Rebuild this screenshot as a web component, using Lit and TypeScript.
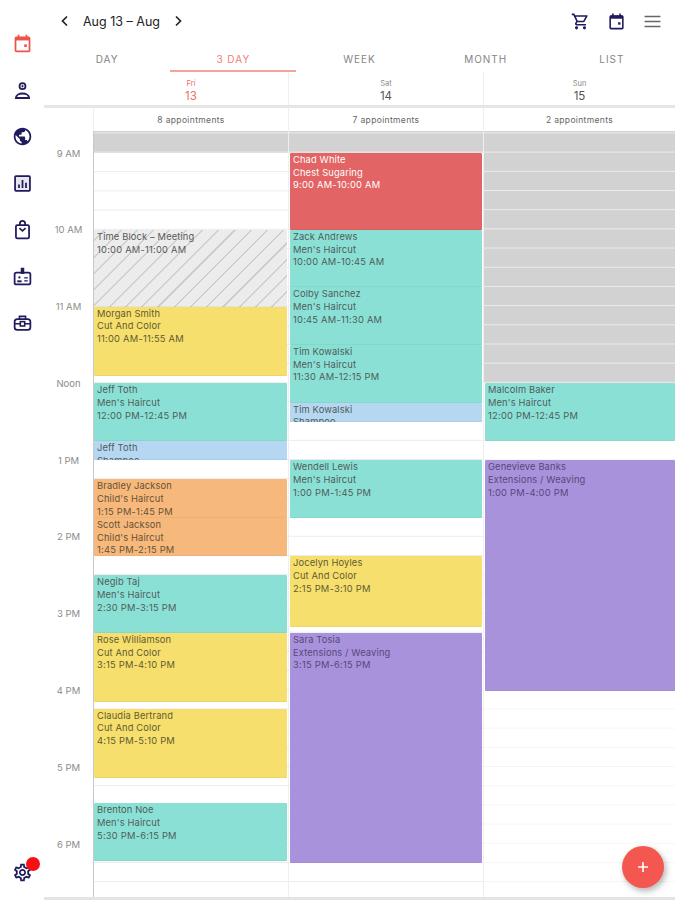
import { LitElement, css, html, svg } from "lit";
import { customElement } from "lit/decorators.js";

const HOUR = 76.8;
const NINE_AM_Y = 22; // the 9 AM line sits 22px below the grid's top edge

type Kind = "teal" | "yellow" | "orange" | "blue" | "purple" | "red" | "block" | "closed";

interface Appt {
  kind: Kind;
  from: number;
  to: number;
  lines?: string[];
}

const t = (h: number, m = 0) => h * 60 + m;
const yOf = (min: number) => NINE_AM_Y + ((min - t(9)) * HOUR) / 60;

const haircut = (name: string, time: string) => [name, "Men's Haircut", time];
const color = (name: string, time: string) => [name, "Cut And Color", time];

const DAYS: { dow: string; num: string; count: string; today?: boolean; appts: Appt[] }[] = [
  {
    dow: "Fri",
    num: "13",
    count: "8 appointments",
    today: true,
    appts: [
      { kind: "closed", from: t(8, 40), to: t(9) },
      { kind: "block", from: t(10), to: t(11), lines: ["Time Block – Meeting", "10:00 AM-11:00 AM"] },
      { kind: "yellow", from: t(11), to: t(11, 54), lines: color("Morgan Smith", "11:00 AM-11:55 AM") },
      { kind: "teal", from: t(12), to: t(12, 45), lines: haircut("Jeff Toth", "12:00 PM-12:45 PM") },
      { kind: "blue", from: t(12, 45), to: t(13), lines: ["Jeff Toth", "Shampoo"] },
      { kind: "orange", from: t(13, 15), to: t(13, 45), lines: ["Bradley Jackson", "Child's Haircut", "1:15 PM-1:45 PM"] },
      { kind: "orange", from: t(13, 45), to: t(14, 15), lines: ["Scott Jackson", "Child's Haircut", "1:45 PM-2:15 PM"] },
      { kind: "teal", from: t(14, 30), to: t(15, 15), lines: haircut("Negib Taj", "2:30 PM-3:15 PM") },
      { kind: "yellow", from: t(15, 15), to: t(16, 9), lines: color("Rose Williamson", "3:15 PM-4:10 PM") },
      { kind: "yellow", from: t(16, 14), to: t(17, 8), lines: color("Claudia Bertrand", "4:15 PM-5:10 PM") },
      { kind: "teal", from: t(17, 28), to: t(18, 13), lines: haircut("Brenton Noe", "5:30 PM-6:15 PM") },
    ],
  },
  {
    dow: "Sat",
    num: "14",
    count: "7 appointments",
    appts: [
      { kind: "closed", from: t(8, 40), to: t(9) },
      { kind: "red", from: t(9), to: t(10), lines: ["Chad White", "Chest Sugaring", "9:00 AM-10:00 AM"] },
      { kind: "teal", from: t(10), to: t(10, 45), lines: haircut("Zack Andrews", "10:00 AM-10:45 AM") },
      { kind: "teal", from: t(10, 45), to: t(11, 30), lines: haircut("Colby Sanchez", "10:45 AM-11:30 AM") },
      { kind: "teal", from: t(11, 30), to: t(12, 15), lines: haircut("Tim Kowalski", "11:30 AM-12:15 PM") },
      { kind: "blue", from: t(12, 15), to: t(12, 30), lines: ["Tim Kowalski", "Shampoo"] },
      { kind: "teal", from: t(13), to: t(13, 45), lines: haircut("Wendell Lewis", "1:00 PM-1:45 PM") },
      { kind: "yellow", from: t(14, 15), to: t(15, 10), lines: color("Jocelyn Hoyles", "2:15 PM-3:10 PM") },
      { kind: "purple", from: t(15, 15), to: t(18, 15), lines: ["Sara Tosia", "Extensions / Weaving", "3:15 PM-6:15 PM"] },
    ],
  },
  {
    dow: "Sun",
    num: "15",
    count: "2 appointments",
    appts: [
      { kind: "closed", from: t(8, 40), to: t(12) },
      { kind: "teal", from: t(12), to: t(12, 45), lines: haircut("Malcolm Baker", "12:00 PM-12:45 PM") },
      { kind: "purple", from: t(13), to: t(16), lines: ["Genevieve Banks", "Extensions / Weaving", "1:00 PM-4:00 PM"] },
    ],
  },
];

const HOURS = ["9 AM", "10 AM", "11 AM", "Noon", "1 PM", "2 PM", "3 PM", "4 PM", "5 PM", "6 PM"];
const TABS = ["DAY", "3 DAY", "WEEK", "MONTH", "LIST"];

const icon = (body: unknown, cls = "") =>
  html`<svg class="icon ${cls}" viewBox="0 0 24 24" fill="none" stroke="currentColor" stroke-width="2">${body}</svg>`;

const ICONS = {
  event: svg`<rect x="4" y="5" width="16" height="16" rx="1"/><path d="M4 6.5h16" stroke-width="4"/><path d="M7.5 2v4M16.5 2v4"/><rect x="14" y="13" width="3" height="3" fill="currentColor" stroke="none"/>`,
  person: svg`<circle cx="12" cy="7" r="3.4"/><path d="M12 5.5v3M10.5 7h3" stroke-width="1"/><path d="M4.5 20.5c0-3 3.5-5 7.5-5s7.5 2 7.5 5z" stroke-width="2.2"/>`,
  globe: svg`<path stroke="none" fill="currentColor" d="M12 2C6.48 2 2 6.48 2 12s4.48 10 10 10 10-4.48 10-10S17.52 2 12 2zm-1 17.93c-3.95-.49-7-3.85-7-7.93 0-.62.08-1.21.21-1.79L9 15v1c0 1.1.9 2 2 2v1.93zm6.9-2.54c-.26-.81-1-1.39-1.9-1.39h-1v-3c0-.55-.45-1-1-1H8v-2h2c.55 0 1-.45 1-1V7h2c1.1 0 2-.9 2-2v-.41c2.93 1.19 5 4.06 5 7.41 0 2.08-.8 3.97-2.1 5.39z"/>`,
  chart: svg`<rect x="3.5" y="3.5" width="17" height="17" rx="1" fill="#e6e6ee"/><path d="M8 17v-4M12 17V8M16 17v-6"/>`,
  bag: svg`<rect x="4.5" y="7" width="15" height="15" rx="1.5"/><path d="M9 7V5a3 3 0 0 1 6 0v2M8.5 10.5l3.5 3 3.5-3"/>`,
  badge: svg`<rect x="3" y="7.5" width="18" height="13.5" rx="2"/><path d="M12 2v7" stroke-width="4"/><circle cx="8.5" cy="13" r="1.3" fill="currentColor" stroke="none"/><path d="M6 17.5h5" stroke-width="2.2"/><path d="M14 13.5h4M14 17h4" stroke-width="1.5"/>`,
  briefcase: svg`<rect x="3" y="8" width="18" height="12.5" rx="3"/><path d="M8.5 8V5h7v3M3 13.5h18" stroke-width="1.8"/><rect x="9.5" y="11" width="5" height="5" fill="#fff" stroke-width="1.8"/>`,
  cart: svg`<path stroke="none" fill="currentColor" d="M15.55 13c.75 0 1.41-.41 1.75-1.03l3.58-6.49A.996.996 0 0 0 20.01 4H5.21l-.94-2H1v2h2l3.6 7.59-1.35 2.44C4.52 15.37 5.48 17 7 17h12v-2H7l1.1-2h7.45zM6.16 6h12.15l-2.76 5H8.53L6.16 6zM7 18c-1.1 0-1.99.9-1.99 2S5.9 22 7 22s2-.9 2-2-.9-2-2-2zm10 0c-1.1 0-1.99.9-1.99 2s.89 2 1.99 2 2-.9 2-2-.9-2-2-2z"/>`,
  menu: svg`<path d="M2 5.7h20M2 12h20M2 18.3h20" stroke-width="1.7"/>`,
  gear: svg`<path stroke="none" fill="currentColor" d="M19.43 12.98c.04-.32.07-.64.07-.98 0-.34-.03-.66-.07-.98l2.11-1.65c.19-.15.24-.42.12-.64l-2-3.46c-.09-.16-.26-.25-.44-.25-.06 0-.12.01-.17.03l-2.49 1c-.52-.4-1.08-.73-1.69-.98l-.38-2.65C14.46 2.18 14.25 2 14 2h-4c-.25 0-.46.18-.49.42l-.38 2.65c-.61.25-1.17.59-1.69.98l-2.49-1c-.06-.02-.12-.03-.18-.03-.17 0-.34.09-.43.25l-2 3.46c-.13.22-.07.49.12.64l2.11 1.65c-.04.32-.07.65-.07.98 0 .33.03.66.07.98l-2.11 1.65c-.19.15-.24.42-.12.64l2 3.46c.09.16.26.25.44.25.06 0 .12-.01.17-.03l2.49-1c.52.4 1.08.73 1.69.98l.38 2.65c.03.24.24.42.49.42h4c.25 0 .46-.18.49-.42l.38-2.65c.61-.25 1.17-.59 1.69-.98l2.49 1c.06.02.12.03.18.03.17 0 .34-.09.43-.25l2-3.46c.12-.22.07-.49-.12-.64l-2.11-1.65zm-1.98-1.71c.04.31.05.52.05.73 0 .21-.02.43-.05.73l-.14 1.13.89.7 1.08.84-.7 1.21-1.27-.51-1.04-.42-.9.68c-.43.32-.84.56-1.25.73l-1.06.43-.16 1.13-.2 1.35h-1.4l-.19-1.35-.16-1.13-1.06-.43c-.43-.18-.83-.41-1.23-.71l-.91-.7-1.06.43-1.27.51-.7-1.21 1.08-.84.89-.7-.14-1.13c-.03-.31-.05-.54-.05-.74s.02-.43.05-.73l.14-1.13-.89-.7-1.08-.84.7-1.21 1.27.51 1.04.42.9-.68c.43-.32.84-.56 1.25-.73l1.06-.43.16-1.13.2-1.35h1.39l.19 1.35.16 1.13 1.06.43c.43.18.83.41 1.23.71l.91.7 1.06-.43 1.27-.51.7 1.21-1.07.85-.89.7.14 1.13zM12 8c-2.21 0-4 1.79-4 4s1.79 4 4 4 4-1.79 4-4-1.79-4-4-4zm0 6c-1.1 0-2-.9-2-2s.9-2 2-2 2 .9 2 2-.9 2-2 2z"/>`,
};

const chevron = (d: string) =>
  html`<svg class="chev" viewBox="0 0 10 12" fill="none" stroke="currentColor" stroke-width="1.7"><path d=${d} /></svg>`;

@customElement("app-root")
export class AppRoot extends LitElement {
  static styles = css`
    :host {
      display: flex;
      position: relative;
      width: 675px;
      height: 900px;
      overflow: hidden;
      background: #fff;
      color: #1f1b5c;
      font-family: Inter, "Open Sans", sans-serif;
    }
    .icon {
      display: block;
      width: 21px;
      height: 21px;
    }
    .side {
      width: 44px;
      flex: none;
      display: flex;
      flex-direction: column;
      align-items: center;
      gap: 25.5px;
      padding: 33px 0 17px;
      box-sizing: border-box;
    }
    .side .active {
      color: #f0524c;
    }
    .gear {
      margin-top: auto;
      position: relative;
    }
    .dot {
      position: absolute;
      top: -5px;
      left: 14.5px;
      width: 14px;
      height: 14px;
      border-radius: 50%;
      background: #f80f14;
    }
    .main {
      flex: 1;
      min-width: 0;
      display: flex;
      flex-direction: column;
    }
    .top {
      height: 42px;
      flex: none;
      display: flex;
      align-items: center;
      box-sizing: border-box;
      padding: 0 13px 0 16px;
      color: #222;
      font-size: 12.5px;
    }
    .chev {
      width: 10px;
      height: 12px;
      flex: none;
    }
    .range {
      width: 78px;
      margin: 0 12px 0 13px;
      white-space: nowrap;
    }
    .actions {
      margin-left: auto;
      display: flex;
      gap: 17px;
      color: #1f1b5c;
    }
    .actions .icon {
      width: 19px;
      height: 19px;
    }
    .actions .menu {
      color: #666;
    }
    .tabs {
      height: 30px;
      flex: none;
      display: grid;
      grid-template-columns: repeat(5, 1fr);
    }
    .tab {
      display: flex;
      align-items: center;
      justify-content: center;
      padding-top: 4px;
      box-sizing: border-box;
      font-size: 10px;
      letter-spacing: 1px;
      color: #858585;
    }
    .tab.on {
      color: #f08078;
      border-bottom: 2.5px solid #f6a3a0;
      padding-top: 6px;
    }
    .cols {
      display: grid;
      grid-template-columns: 49px 195px 195px 1fr;
      flex: none;
    }
    .cell {
      border-left: 1px solid #efefef;
      text-align: center;
    }
    .head {
      height: 33px;
      border-bottom: 3px solid #e6e6e6;
    }
    .head .cell {
      display: flex;
      flex-direction: column;
      justify-content: center;
      gap: 2px;
      padding-top: 5px;
      color: #555;
    }
    .head .cell:first-child,
    .head .cell:nth-child(2),
    .counts .cell:first-child {
      border-color: transparent;
    }
    .dow {
      font-size: 7.5px;
      line-height: 9px;
      color: #8a8a8a;
    }
    .num {
      font-size: 11.5px;
      line-height: 13px;
    }
    .today .dow,
    .today .num {
      color: #ee6e67;
    }
    .counts {
      height: 23px;
      font-size: 8.5px;
      letter-spacing: 0.35px;
      color: #666;
    }
    .counts .cell {
      display: flex;
      align-items: center;
      justify-content: center;
    }
    .grid {
      flex: 1;
      min-height: 0;
      border-bottom: 3px solid #e4e4e4;
    }
    .hours {
      display: grid;
      grid-auto-rows: 76.8px;
      margin-top: -16.4px;
      height: 100px;
      font-size: 9.5px;
      color: #8c8c8c;
    }
    .hour {
      display: flex;
      align-items: center;
      justify-content: center;
    }
    .day {
      position: relative;
      overflow: hidden;
      border-left: 1px solid #efefef;
      background: linear-gradient(to bottom, transparent 18.2px, #ebebeb 18.2px) 0 2.8px / 100% 19.2px;
    }
    .day.first {
      border-left-color: #c8c8c8;
    }
    .day.last {
      background: linear-gradient(to bottom, transparent 18.2px, #f5f5f5 18.2px) 0 2.8px / 100% 19.2px;
    }
    .appt {
      position: absolute;
      left: 1px;
      right: 1px;
      box-sizing: border-box;
      padding: 1px 3px 0;
      overflow: hidden;
      border-radius: 1px;
      box-shadow: inset 0 -1px rgba(0, 0, 0, 0.04);
      font-size: 9.3px;
      line-height: 12.7px;
      letter-spacing: 0.15px;
      color: #4e5d5a;
      white-space: nowrap;
    }
    .time {
      letter-spacing: 0.25px;
    }
    .first .appt {
      left: 0;
    }
    .last .appt {
      right: 0;
    }
    .teal { background: #8be0d5; }
    .yellow { background: #f6df6d; color: #5f5b32; }
    .orange { background: #f6b97b; color: #665238; }
    .blue { background: #b5d7f1; }
    .purple { background: #a992dc; color: #55497a; }
    .red { background: #e26464; color: #fff; }
    .block {
      background: repeating-linear-gradient(-45deg, #ececec 0 10px, #cfcfcf 10px 11.5px);
      color: #5a5a5a;
    }
    .appt.closed {
      left: 0;
      right: 0;
      border-radius: 0;
      padding: 0;
      box-shadow: none;
      /* 8:40 starts 3.6px above the grid, so the 15 minute lines land 6.4px into each tile */
      background: linear-gradient(to bottom, #d2d2d2 18.2px, #ececec 18.2px) 0 6.4px / 100% 19.2px;
    }
    .fab {
      position: absolute;
      left: 622px;
      top: 846px;
      width: 42px;
      height: 42px;
      border-radius: 50%;
      background: #f4574f;
      box-shadow: 2px 3px 6px rgba(0, 0, 0, 0.3);
      display: flex;
      align-items: center;
      justify-content: center;
    }
    .fab svg {
      width: 10px;
      height: 10px;
    }
  `;

  render() {
    return html`
      <nav class="side">
        ${icon(ICONS.event, "active")} ${icon(ICONS.person)} ${icon(ICONS.globe)} ${icon(ICONS.chart)}
        ${icon(ICONS.bag)} ${icon(ICONS.badge)} ${icon(ICONS.briefcase)}
        <div class="gear">${icon(ICONS.gear)}<span class="dot"></span></div>
      </nav>
      <div class="main">
        <div class="top">
          ${chevron("M7 1.5 2.5 6 7 10.5")}
          <span class="range">Aug 13 – Aug</span>
          ${chevron("M3 1.5 7.5 6 3 10.5")}
          <div class="actions">
            ${icon(ICONS.cart)} ${icon(ICONS.event)} ${icon(ICONS.menu, "menu")}
          </div>
        </div>
        <div class="tabs">
          ${TABS.map((n) => html`<div class="tab ${n === "3 DAY" ? "on" : ""}">${n}</div>`)}
        </div>
        <div class="cols head">
          <div class="cell"></div>
          ${DAYS.map(
            (d) => html`<div class="cell ${d.today ? "today" : ""}">
              <span class="dow">${d.dow}</span><span class="num">${d.num}</span>
            </div>`
          )}
        </div>
        <div class="cols counts">
          <div class="cell"></div>
          ${DAYS.map((d) => html`<div class="cell">${d.count}</div>`)}
        </div>
        <div class="cols grid">
          <div class="hours">${HOURS.map((h) => html`<div class="hour">${h}</div>`)}</div>
          ${DAYS.map(
            (d, i) => html`<div class="day ${i === 0 ? "first" : ""} ${i === 2 ? "last" : ""}">
              ${d.appts.map(
                (a) => html`<div
                  class="appt ${a.kind}"
                  style="top:${yOf(a.from)}px;height:${yOf(a.to) - yOf(a.from)}px"
                >
                  ${(a.lines ?? []).map((l) => html`<div class=${/\d/.test(l) ? "time" : ""}>${l}</div>`)}
                </div>`
              )}
            </div>`
          )}
        </div>
      </div>
      <div class="fab">
        <svg viewBox="0 0 11 11" fill="none" stroke="#fff" stroke-width="1.8"><path d="M5.5 0v11M0 5.5h11" /></svg>
      </div>
    `;
  }
}
